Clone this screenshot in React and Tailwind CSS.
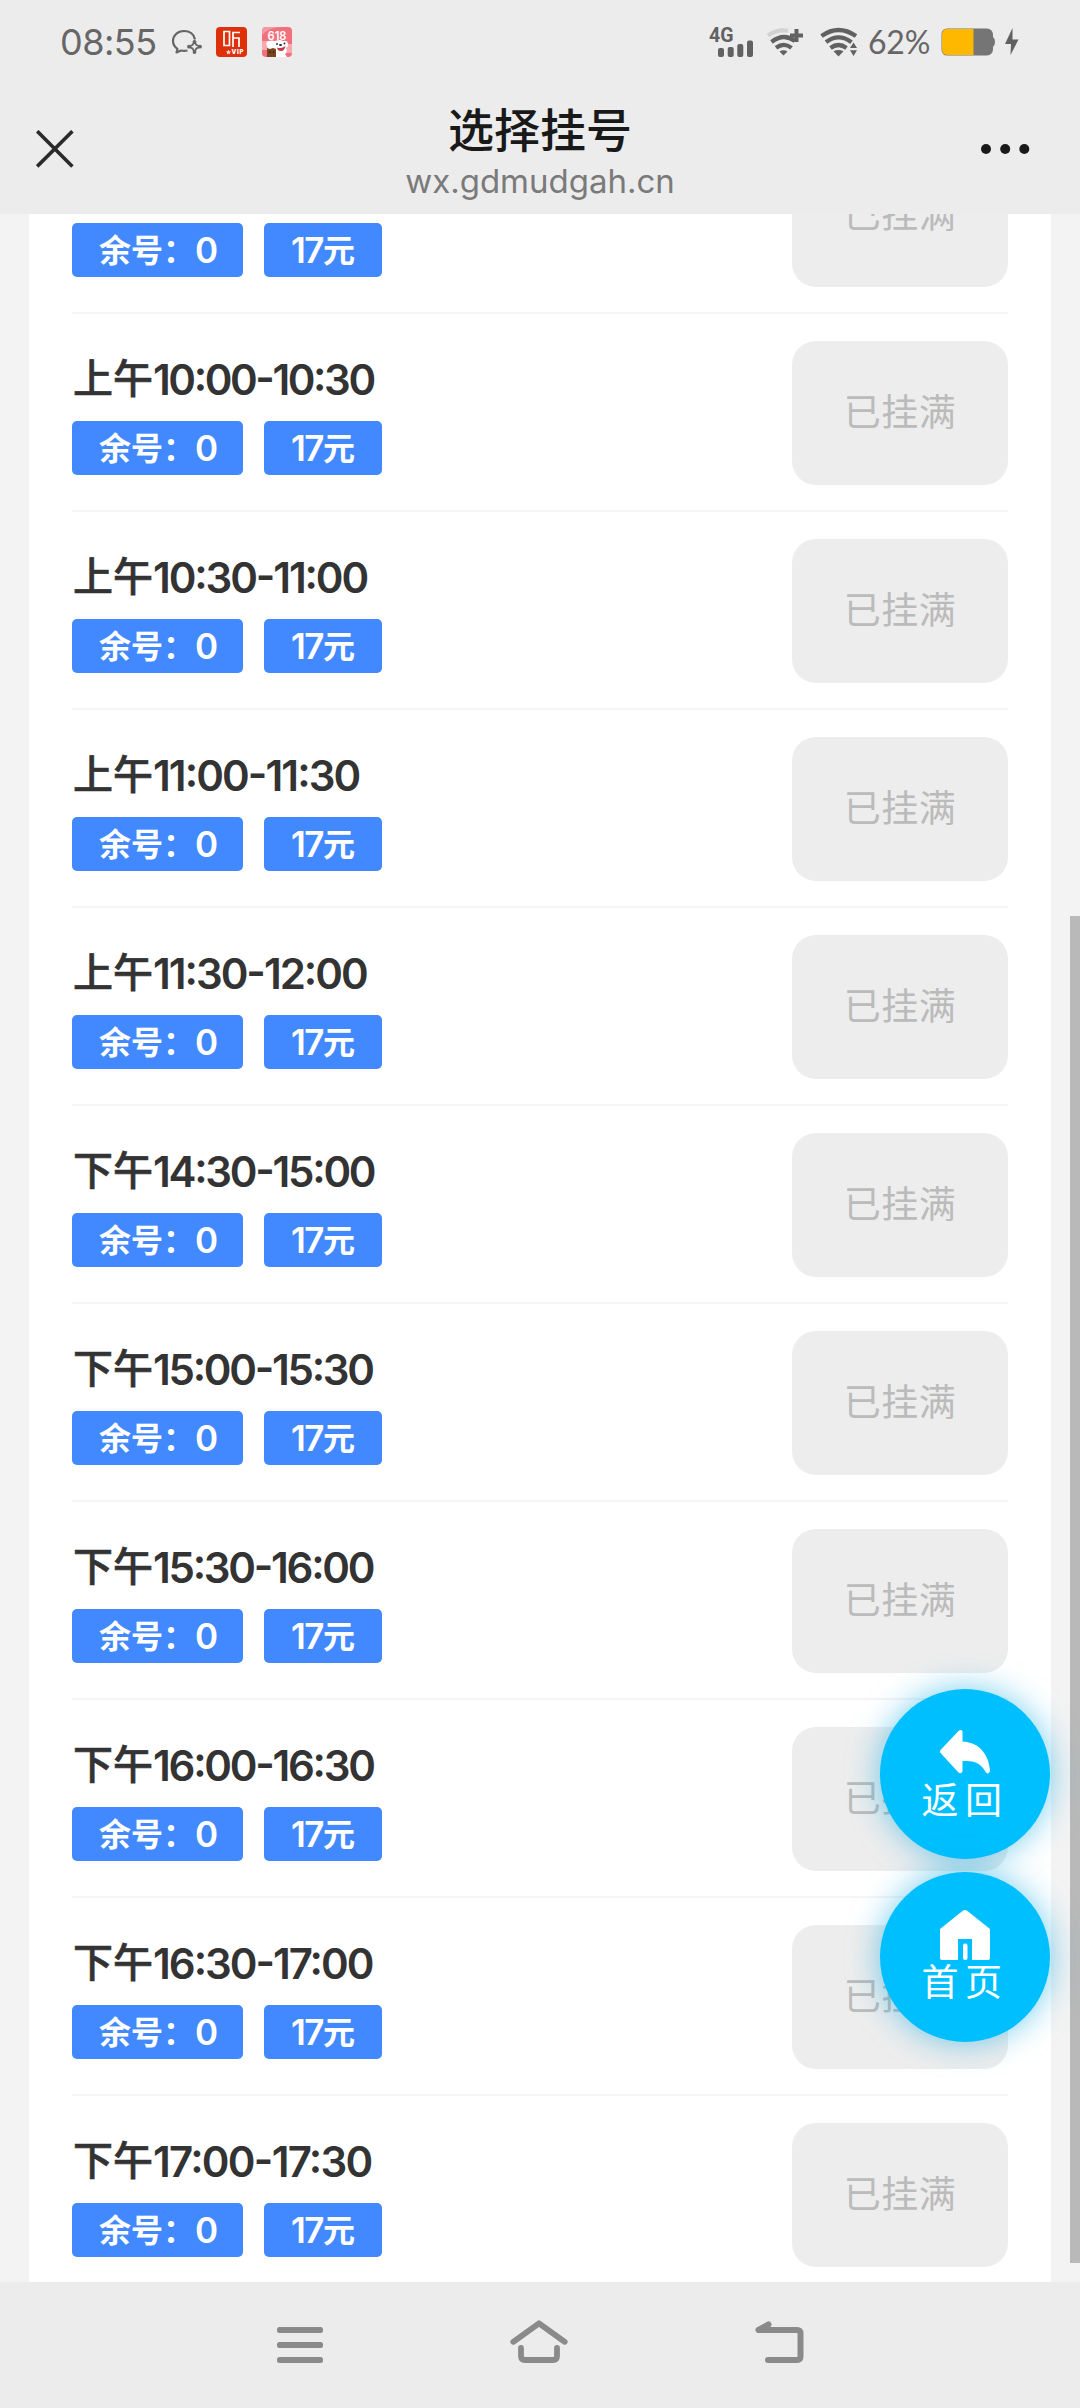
import React from "react";

const slots = [
  { period: "上午", time: "09:30-10:00", spacing: "tracking-[-2.3px]" },
  { period: "上午", time: "10:00-10:30", spacing: "tracking-[-2.4px]" },
  { period: "上午", time: "10:30-11:00", spacing: "tracking-[-2.1px]" },
  { period: "上午", time: "11:00-11:30", spacing: "tracking-[-1.9px]" },
  { period: "上午", time: "11:30-12:00", spacing: "tracking-[-2px]" },
  { period: "下午", time: "14:30-15:00", spacing: "tracking-[-2.25px]" },
  { period: "下午", time: "15:00-15:30", spacing: "tracking-[-2.25px]" },
  { period: "下午", time: "15:30-16:00", spacing: "tracking-[-2.25px]" },
  { period: "下午", time: "16:00-16:30", spacing: "tracking-[-2.25px]" },
  { period: "下午", time: "16:30-17:00", spacing: "tracking-[-2px]" },
  { period: "下午", time: "17:00-17:30", spacing: "tracking-[-1.7px]" },
];

function ChatIcon() {
  return (
    <svg className="ml-[16px] h-[28px] w-[32px]" viewBox="0 0 32 28" fill="none" stroke="#666" strokeWidth="2.2" strokeLinejoin="round">
      <path d="M24 11.500C23 6 18.500 3 13 3 6.500 3 2 7.500 2 13c0 3.500 1.800 6 4.500 7.800L5.500 24.500l4.500-2c2 .5 4.500.5 6.500 0" />
      <path d="M23.500 13.500l1.700 3.300 3.600 1.900-3.600 1.900-1.700 3.400-1.800-3.400-3.500-1.900 3.500-1.900z" strokeWidth="1.800" />
      <circle cx="23.500" cy="13.800" r="1.900" fill="#666" stroke="none" />
      <circle cx="29" cy="18.700" r="1.900" fill="#666" stroke="none" />
      <circle cx="23.500" cy="24" r="1.900" fill="#666" stroke="none" />
      <circle cx="18" cy="18.700" r="1.900" fill="#666" stroke="none" />
    </svg>
  );
}

function ListenIcon() {
  return (
    <svg className="ml-[13px] h-[30px] w-[31px] overflow-visible" viewBox="0 0 31 30" fill="#fff">
      <rect width="31" height="30" rx="4" fill="#de3009" />
      <path d="M8 4.500h5.500v14H8zM17 20V5.500h7M17 11h6v9" fill="none" stroke="#fff" strokeWidth="1.700" />
      <path d="M12.500 22.500l.8 1.700 1.900.2-1.400 1.300.4 1.800-1.700-.9-1.600.9.300-1.800-1.300-1.300 1.800-.2z" fill="#ffd9cd" />
      <text x="15.500" y="27.300" fontFamily="Inter" fontSize="6" fontWeight="900" textLength="12">VIP</text>
    </svg>
  );
}

function PromoIcon() {
  return (
    <svg className="ml-[15px] h-[30px] w-[30px] overflow-visible" viewBox="0 0 30 30">
      <rect width="30" height="30" rx="4" fill="#f2707d" />
      <path d="M0 8Q8 0 20 0H4Q0 0 0 4z" fill="#f59aa0" />
      <path d="M0 14h6l-1 9H0zM24 17h6v9h-6z" fill="#f7a9ae" />
      <text x="15" y="13" textAnchor="middle" fontFamily="Inter" fontSize="12" fontWeight="600" fill="#fff" textLength="19" lengthAdjust="spacingAndGlyphs">618</text>
      <path d="M5 19q-2-3 1-5 4-1 7 0 5-2 8 0 4-1 5 2 1 3-2 5 2 4-1 6l2 3H8z" fill="#fff" />
      <circle cx="15" cy="17" r=".9" fill="#222" />
      <circle cx="22.500" cy="16.500" r=".9" fill="#222" />
      <ellipse cx="18.500" cy="18" rx="1.500" ry="1" fill="#222" />
      <path d="M15 20.500q5 1.500 8.500-1.500-1 5-4.500 5-3.500 0-4-3.500z" fill="#c03a44" />
      <path d="M5 21l3 1 3-1 3 1v8H5z" fill="#7b431f" />
      <circle cx="8" cy="25" r=".8" fill="#2c1408" />
      <circle cx="11.500" cy="25" r=".8" fill="#2c1408" />
    </svg>
  );
}

function SignalIcon() {
  return (
    <svg className="h-[31px] w-[45px] overflow-visible" viewBox="0 0 45 31" fill="#616161">
      <text x="0" y="15" fontFamily="Roboto" fontSize="20" fontWeight="700" textLength="24.500" lengthAdjust="spacingAndGlyphs">4G</text>
      <rect x="9" y="21" width="6" height="9" rx="2" />
      <rect x="18.700" y="20" width="6" height="10" rx="2" />
      <rect x="28.300" y="17" width="6" height="13" rx="2" />
      <rect x="38" y="13.500" width="6" height="16.500" rx="2" />
    </svg>
  );
}

function WifiPlusIcon() {
  return (
    <svg className="ml-[12px] h-[30px] w-[38px]" viewBox="0 0 38 30" fill="none" strokeWidth="4.200">
      <path d="M2 8.500Q11 1.800 22 3.800" stroke="#d2d2d2" />
      <path d="M5.500 15q12-9.500 23.500-1" stroke="#616161" />
      <path d="M10 20.800q8-6 15.500 0" stroke="#616161" />
      <path d="M13.500 24.500q4-2.600 8 0l-4 4z" fill="#616161" />
      <path d="M30.500 2v13M24 8.500h13" stroke="#616161" strokeWidth="4" />
    </svg>
  );
}

function WifiIcon() {
  return (
    <svg className="ml-[16px] h-[30px] w-[38px]" viewBox="0 0 38 30" fill="none" stroke="#616161" strokeWidth="4.200">
      <path d="M1.500 9q17-12 34.500 0" />
      <path d="M6 15.200q12.500-9.500 25.500 0" />
      <path d="M10.500 21q8-6 16 0" />
      <path d="M13.500 24.200q5-2.600 10 0l-5 5.300z" fill="#616161" stroke="none" />
      <path d="M30 21l3.500-5.500L37 21zM30 23.200h7L33.500 29z" fill="#616161" stroke="none" />
    </svg>
  );
}

function BatteryIcon() {
  return (
    <svg className="ml-[11px] h-[28px] w-[78px]" viewBox="0 0 78 28">
      <path d="M6 .5h40a6 6 0 0 1 6 6V9q2 1.500 2 5t-2 5v2.500a6 6 0 0 1-6 6H6a5.500 5.500 0 0 1-5.500-5.500V6A5.500 5.500 0 0 1 6 .5z" fill="#757575" />
      <path d="M6 1h26.500v26H6a5 5 0 0 1-5-5V6a5 5 0 0 1 5-5z" fill="#ffb800" />
      <path d="M71.500 0L64 16h6l-.5 11L77.500 11.500h-6z" fill="#616161" />
    </svg>
  );
}

function StatusBar() {
  return (
    <div className="flex h-[84px] items-center justify-between pl-[60px] pr-[61px]">
      <div className="flex items-center">
        <span className="w-[95px] whitespace-nowrap font-['Inter'] text-[36px] leading-[44px] tracking-[-0.5px] text-[#666]">08:55</span>
        <ChatIcon />
        <ListenIcon />
        <PromoIcon />
      </div>
      <div className="flex items-center">
        <SignalIcon />
        <WifiPlusIcon />
        <WifiIcon />
        <span className="ml-[10px] w-[62px] whitespace-nowrap font-['Lato'] text-[32px] leading-[40px] tracking-[-0.2px] text-[#666]">62%</span>
        <BatteryIcon />
      </div>
    </div>
  );
}

function TitleBar() {
  return (
    <div className="grid h-[130px] grid-cols-[1fr_auto_1fr] items-start pl-[36px] pr-[36px]">
      <svg className="mt-[46px] h-[38px] w-[38px]" viewBox="0 0 38 38" stroke="#2a2a2a" strokeWidth="3.600">
        <path d="M1.200 1.200l35.200 35.200M36.400 1.200L1.200 36.400" />
      </svg>
      <div className="flex flex-col items-center">
        <h1 className="mt-[11px] whitespace-nowrap font-['Noto_Sans_CJK_SC'] text-[46px] font-medium leading-[64px] text-[#191919]">选择挂号</h1>
        <p className="mt-[2px] whitespace-nowrap font-['Inter'] text-[33px] leading-[40px] text-[#7a7a7a]">wx.gdmudgah.cn</p>
      </div>
      <svg className="mr-[14px] mt-[60px] h-[10px] w-[49px] justify-self-end" viewBox="0 0 49 10" fill="#191919">
        <circle cx="5" cy="5" r="5" />
        <circle cx="24.200" cy="5" r="5" />
        <circle cx="43.300" cy="5" r="5" />
      </svg>
    </div>
  );
}

function Slot({ period, time, spacing }) {
  return (
    <li className="flex h-[198px] shrink-0 items-start justify-between border-b-2 border-[#f5f5f5] pt-[27px]">
      <div>
        <div className="mt-[10px] flex h-[56px] items-center whitespace-nowrap pl-[1px] text-[#333]">
          <span className="pb-[6px] font-['Noto_Sans_CJK_SC'] text-[40px] font-medium leading-[56px] [-webkit-text-stroke:0.6px_#333]">{period}</span>
          <span className={"pt-[2px] font-['Inter'] text-[42px] font-semibold leading-[56px] [font-feature-settings:'case'] " + spacing}>{time}</span>
        </div>
        <div className="mt-[14px] flex gap-[21px] text-white">
          <span className="flex h-[54px] w-[171px] items-center whitespace-nowrap rounded-[5px] bg-[#4289ff] pl-[27px]">
            <span className="pb-[5px] font-['Noto_Sans_CJK_SC'] text-[32px] font-bold leading-[48px]">余号：</span>
            <span className="font-['Inter'] text-[35px] font-semibold leading-[54px] tracking-[-1px]">0</span>
          </span>
          <span className="flex h-[54px] w-[118px] items-center justify-center whitespace-nowrap rounded-[5px] bg-[#4289ff]">
            <span className="font-['Inter'] text-[35px] font-semibold leading-[54px] tracking-[-1.5px]">17</span>
            <span className="pb-[5px] font-['Noto_Sans_CJK_SC'] text-[32px] font-bold leading-[48px]">元</span>
          </span>
        </div>
      </div>
      <button className="flex h-[144px] w-[216px] items-center justify-center rounded-[24px] bg-[#ededed] pb-[7px] font-['Noto_Sans_CJK_SC'] text-[37px] leading-[54px] tracking-[0.5px] text-[#bbb]">
        已挂满
      </button>
    </li>
  );
}

function FloatButton({ label, children }) {
  return (
    <button className="flex h-[170px] w-[170px] flex-col items-center rounded-full bg-[#00bfff] text-white shadow-[0_0_32px_rgba(0,165,225,0.55)]">
      {children}
      <span className="whitespace-nowrap font-['Noto_Sans_CJK_SC'] text-[37px] leading-[44px] tracking-[6.5px]">{label}</span>
    </button>
  );
}

function NavBar() {
  return (
    <nav className="flex h-[126px] items-start justify-between bg-[#ececec] pl-[277px] pr-[276px] pt-[38px]">
      <svg className="mt-[7px] h-[36px] w-[46px]" viewBox="0 0 46 36" fill="#8a8a8a">
        <rect width="46" height="6" rx="2.500" />
        <rect y="15" width="46" height="6" rx="2.500" />
        <rect y="30" width="46" height="6" rx="2.500" />
      </svg>
      <svg className="h-[43px] w-[58px]" viewBox="0 0 58 43" fill="none" stroke="#8a8a8a" strokeWidth="5.800" strokeLinecap="round" strokeLinejoin="round">
        <path d="M3.300 21.800L29 3.300l25.700 18.500" />
        <path d="M11 28v8q0 4 4 4h28q4 0 4-4v-8" />
      </svg>
      <svg className="h-[43px] w-[49px]" viewBox="0 0 49 43" fill="none" stroke="#8a8a8a" strokeWidth="6" strokeLinecap="round" strokeLinejoin="round">
        <path d="M13.500 4.500L3.500 10H42q3.500 0 3.500 3.500v23q0 3.500-3.500 3.500H13" />
      </svg>
    </nav>
  );
}

export default function App() {
  return (
    <div className="relative flex h-[2408px] w-[1080px] flex-col overflow-hidden bg-[#f3f3f3]">
      <header className="h-[214px] shrink-0 bg-[#ececec]">
        <StatusBar />
        <TitleBar />
      </header>
      <main className="h-[2068px] shrink-0 overflow-hidden px-[29px]">
        <ul className="-mt-[98px] flex flex-col bg-white px-[43px]">
          {slots.map((slot) => (
            <Slot key={slot.time} {...slot} />
          ))}
        </ul>
      </main>
      <NavBar />
      <div className="absolute right-0 top-[916px] h-[1347px] w-[10px] bg-[#b9b9b9]" />
      <div className="absolute right-[30px] top-[1689px] flex flex-col gap-[13px]">
        <FloatButton label="返回">
          <svg className="mb-[2px] mt-[41px] h-[44px] w-[50px] shrink-0" viewBox="0 0 50 44" fill="#fff">
            <path d="M22.500 1.500v10C40 12.500 49 25 50 41q-1.500 4-4 1.500C40 32 34 31 22.500 31v10.500q-1.500 3-4 1L1 23.500q-2-2 0-4L18.500 1Q21.500-1 22.500 1.500z" />
          </svg>
        </FloatButton>
        <FloatButton label="首页">
          <svg className="-mb-[2px] mt-[38px] h-[50px] w-[50px] shrink-0" viewBox="0 0 50 50" fill="#fff">
            <path d="M0 19L22.500 1q2.500-2 5 0L50 19v29q0 2-2 2H32V29H18v21H2q-2 0-2-2z" />
            <rect x="23" y="33.500" width="4.500" height="16.500" rx="2" />
          </svg>
        </FloatButton>
      </div>
    </div>
  );
}
